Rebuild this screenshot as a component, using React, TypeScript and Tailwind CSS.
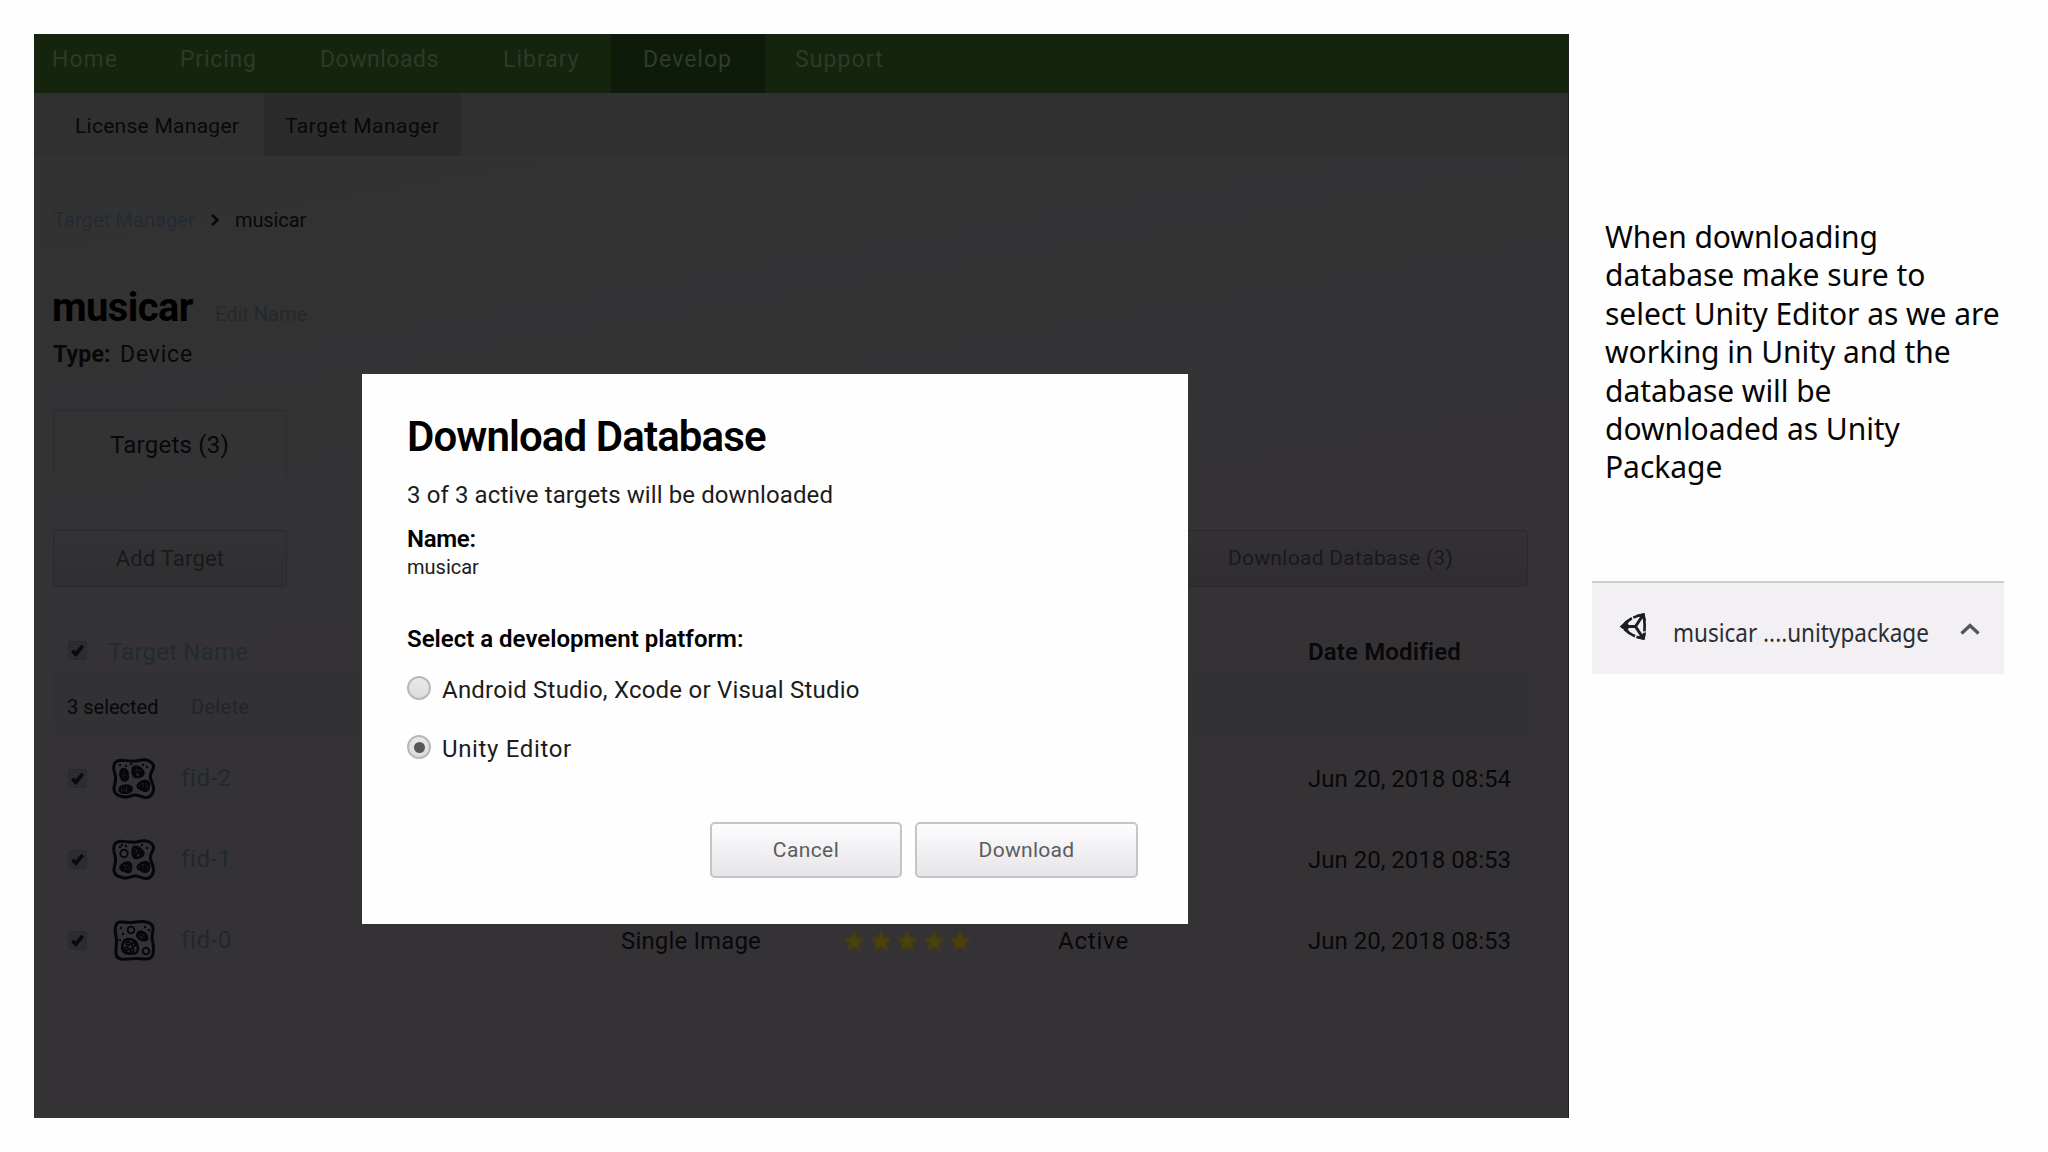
import type { ReactNode } from "react";

const INK = "text-[#08080a]";

function CheckBox() {
  return (
    <span className="flex h-[19px] w-[19px] items-center justify-center rounded-[3px] border border-[#2a2a2c] bg-[#2d2d2f]">
      <svg viewBox="0 0 16 16" className="h-[15px] w-[15px]">
        <path d="M2.500 8.200 6.200 12 13.600 3" fill="none" stroke="#0b0b0d" strokeWidth="3.900" />
      </svg>
    </span>
  );
}

const OUTLINE =
  "M7 2.500C11 1.500 15 3.500 20 3C25 4 28 1 33 1.800C38 2.500 42 5.500 41.500 9C41 13 37.500 15 38.500 20C39.500 24 42 27 41.500 32C41 37 37 40 33 39.500C29 39 26 36.500 22 37C18 38 15 40 10 38.500C5 37.500 1.500 35 2 30C2.500 26 4 24 3.500 19C3 15 1 12 1.800 8C2.300 5 4 3 7 2.500Z";
const SQUARE =
  "M8 2C12 1.500 15 3 20 2.500C25 2 29 1 33 1.800C38 2.500 41.500 5 41 10C40 14 39.500 17 40.500 21C41.500 25 41.500 30 41 34C40 39 36 39.500 31 39C26 38 21 38.500 16 39C10 40 4.500 39 4 34C3.500 29 5 25 4.500 20C4 15 2.500 11 3.500 7C4 4 5.500 2.300 8 2Z";

type Thumb = { outline: string; blobs: string[]; rings: [number, number, number][]; dots: [number, number][] };

const THUMBS: Record<string, Thumb> = {
  "fid-2": {
    outline: OUTLINE,
    blobs: [
      "M9 13C11 9 16 12 15.500 17C17 22 12 24 10 21C8 18 8 16 9 13Z",
      "M22 9C26 7 31 12 31.500 15C31 19 24 20 22 18C20 15 20 11 22 9Z",
      "M9 29C13 26 20 28 19.500 31C19 35 10 36 8 33C7 31 8 30 9 29Z",
      "M27 26C31 22 37 22 37 27C37 32 35 34 31 32C27 30 24 29 27 26Z",
    ],
    rings: [[12, 15, 1.7], [12.5, 20, 1.5], [24.5, 12, 1.8], [28, 15, 1.4], [23, 16, 1], [12, 31, 1.5], [16.5, 31, 1.2], [33.5, 26, 1.5], [33, 30, 1.2], [29.5, 28, 1]],
    dots: [[8, 7], [14, 8], [31, 7], [35, 9], [19, 6]],
  },
  "fid-1": {
    outline: OUTLINE,
    blobs: [
      "M22 8C26 7 31 12 31.500 14C31 18 24 20 22 18C20 15 20 10 22 8Z",
      "M10 26C14 22 19 23 19 28C19 33 17 34 13 32C9 31 7 29 10 26Z",
      "M27 26C31 22 37 22 37 27C37 32 35 34 31 32C27 30 24 29 27 26Z",
    ],
    rings: [[12, 14.5, 3.7], [24.5, 12, 1.8], [28, 14, 1.3], [23.5, 16, 1], [15.5, 26.5, 1.5], [15.5, 30.5, 1.2], [11.5, 28.5, 1], [33.5, 26, 1.5], [33, 30, 1.2], [29.5, 28, 1]],
    dots: [[8, 8], [14, 7], [30, 6], [35, 9], [10, 6]],
  },
  "fid-0": {
    outline: SQUARE,
    blobs: [
      "M13 20C17 18 24 20 25 24C26 27 27 31 24 33C20 34 14 34 12 32C9 29 10 23 13 20Z",
      "M26 13C30 9 36 15 35 19C33 22 26 19 25.500 16C25 15 25.500 14 26 13Z",
    ],
    rings: [[19, 10, 3.4], [34, 31, 3.3], [29, 14.5, 1.5], [32.5, 17.5, 1.3], [16, 23.5, 1.8], [21.5, 24.5, 1.8], [14.5, 29, 1.8], [20, 30, 1.8]],
    dots: [[9, 8], [11, 14], [33, 7], [37, 10], [8, 20]],
  },
};

function TargetThumb({ name }: { name: string }) {
  const t = THUMBS[name];
  return (
    <svg viewBox="0 0 43 41" className="h-[41px] w-[43px] translate-x-px" fill="none" stroke="#070709">
      <path d={t.outline} strokeWidth="3" />
      {t.blobs.map((d) => (
        <path key={d} d={d} strokeWidth="2.6" />
      ))}
      {t.rings.map(([x, y, r], i) => (
        <circle key={i} cx={x} cy={y} r={r} strokeWidth="1.9" />
      ))}
      {t.dots.map(([x, y], i) => (
        <circle key={i} cx={x} cy={y} r="1.2" fill="#070709" stroke="none" />
      ))}
    </svg>
  );
}

function Stars() {
  return (
    <span className="flex gap-[4.500px] pl-px">
      {[0, 1, 2, 3, 4].map((i) => (
        <svg key={i} viewBox="0 0 22 22" className="h-[22px] w-[22px]">
          <path
            d="M11 2 13.600 8 20 8.700 15.300 13.200 16.800 19.600 11 16.300 5.200 19.600 6.700 13.200 2 8.700 8.400 8Z"
            fill="#4b420c"
            stroke="#453d10"
            strokeWidth="2"
            strokeLinejoin="round"
          />
        </svg>
      ))}
    </span>
  );
}

const GRID = "grid grid-cols-[15px_43px_70px_440px_221px_216px_250px_218px] items-center";

function TargetRow({ name, date, details }: { name: string; date: string; details?: boolean }) {
  return (
    <div className={`${GRID} h-[81px] text-2xl ${INK}`}>
      <span />
      <CheckBox />
      <TargetThumb name={name} />
      <span className="-mt-[2px] tracking-[0.6px] text-[#1f282f]">{name}</span>
      <span className="tracking-[0.15px]">{details && "Single Image"}</span>
      <span>{details && <Stars />}</span>
      <span className="tracking-[0.8px]">{details && "Active"}</span>
      <span>{date}</span>
    </div>
  );
}

function Radio({ checked }: { checked?: boolean }) {
  return (
    <span className="flex h-6 w-6 items-center justify-center rounded-full border-2 border-[#b9b9bb] bg-linear-to-b from-[#e9e9ea] to-[#dcdcde]">
      {checked && <span className="h-[11px] w-[11px] rounded-full bg-[#58585a]" />}
    </span>
  );
}

function ModalButton({ className, children }: { className: string; children: ReactNode }) {
  return (
    <button
      className={`h-[56px] rounded-[5px] border-2 border-[#c6c4c8] bg-linear-to-b from-[#fdfcfe] to-[#e7e5e8] pt-px text-[21px] text-[#5c5c5e] ${className}`}
    >
      {children}
    </button>
  );
}

function DownloadDialog() {
  return (
    <div className="absolute top-[340px] left-[328px] flex h-[550px] w-[826px] flex-col bg-[#fefefe] pr-[50px] pl-[46px] text-[#1c1c20]">
      <h2 className="mt-[38px] -ml-[1px] text-[42px] leading-[50px] font-semibold tracking-[-0.9px] text-black">Download Database</h2>
      <p className="mt-[17px] -ml-px text-2xl leading-[32px] tracking-[0.1px]">3 of 3 active targets will be downloaded</p>
      <p className="mt-[12px] -ml-px text-2xl leading-[32px] font-semibold tracking-[-0.3px] text-black">Name:</p>
      <p className="-mt-px -ml-px text-xl leading-[26px]">musicar</p>
      <p className="mt-[43px] -ml-px text-2xl leading-[32px] font-semibold text-black">Select a development platform:</p>
      <label className="mt-[16px] -ml-px flex h-[34px] items-center gap-[11px] text-2xl tracking-[0.22px]">
        <Radio />
        <span className="pt-[3px]">Android Studio, Xcode or Visual Studio</span>
      </label>
      <label className="mt-[25px] -ml-px flex h-[34px] items-center gap-[11px] text-2xl tracking-[0.65px]">
        <Radio checked />
        <span className="pt-[3px]">Unity Editor</span>
      </label>
      <div className="mt-[58px] flex justify-end gap-[13px]">
        <ModalButton className="w-[192px] tracking-[0.4px]">Cancel</ModalButton>
        <ModalButton className="w-[223px] tracking-[0.3px]">Download</ModalButton>
      </div>
    </div>
  );
}

function TargetManager() {
  return (
    <section
      className={`relative h-[1084px] w-[1535px] shrink-0 overflow-hidden border-r border-[#202022] bg-linear-170 from-[#323232] from-10% via-[#333335] via-35% to-[#353235] to-60% ${INK}`}
    >
      <nav className="flex h-[59px] bg-[#14240d] pl-[18px] text-[23px] leading-[51px] text-[#2d3b28]">
        <span className="w-[128px] tracking-[1px]">Home</span>
        <span className="w-[140px] tracking-[0.8px]">Pricing</span>
        <span className="w-[183px] tracking-[0.5px]">Downloads</span>
        <span className="w-[108px] tracking-[1px]">Library</span>
        <span className="w-[154px] bg-[#0e1b0b] pl-[32px] tracking-[1px] text-[#303a2d]">Develop</span>
        <span className="pl-[30px] tracking-[1.100px]">Support</span>
      </nav>
      <div className="flex h-[63px] bg-[#303030] text-[21px] leading-[67px]">
        <span className="w-[230px] pl-[41px] tracking-[0.27px]">License Manager</span>
        <span className="w-[197px] bg-[#2b2b2b] pl-[21px] tracking-[0.5px]">Target Manager</span>
      </div>
      <div className="w-[1494px] pl-[19px]">
        <div className="mt-[50px] flex h-[28px] items-center text-xl">
          <span className="w-[158px] tracking-[0.1px] text-[#232b33]">Target Manager</span>
          <svg viewBox="0 0 8 12" className="mr-[16px] h-[12px] w-[8px]">
            <path d="M1.200 1 6.400 6 1.200 11" fill="none" stroke="#08080a" strokeWidth="2.600" />
          </svg>
          <span className="tracking-[-0.1px]">musicar</span>
        </div>
        <div className="mt-[50px] flex h-[48px] items-baseline leading-[48px]">
          <h1 className="-ml-px w-[163px] text-[40px] font-bold tracking-[-0.6px] text-black">musicar</h1>
          <span className="text-xl text-[#23292b]">Edit Name</span>
        </div>
        <div className="mt-[8px] flex h-[30px] text-[23px] leading-[30px]">
          <span className="w-[67px] font-bold tracking-[0.2px]">Type:</span>
          <span className="tracking-[0.8px]">Device</span>
        </div>
        <div className="mt-[40px] flex h-[66px]">
          <div className="w-[234px] border border-b-0 border-[#2c2c2e] pl-[56px] text-2xl leading-[68px] tracking-[0.25px]">Targets (3)</div>
          <div className="flex-1 border-b border-[#2f2f31]" />
        </div>
        <div className="mt-[54px] flex h-[57px] justify-between text-[#19191b]">
          <button className="w-[234px] rounded-[4px] border border-[#29292b] bg-linear-to-b from-[#333335] to-[#2f2f31] text-[22px] tracking-[0.2px]">
            Add Target
          </button>
          <button className="w-[375px] rounded-[4px] border border-[#2a282b] bg-linear-to-b from-[#343135] to-[#2f2d30] pt-px text-[21px] tracking-[0.3px]">
            Download Database (3)
          </button>
        </div>
        <div className={`${GRID} mt-[45px] h-[40px] text-2xl`}>
          <span />
          <span className="-mt-[4px]">
            <CheckBox />
          </span>
          <span className="col-span-5 -ml-[3px] tracking-[0.2px] text-[#222b2e]">Target Name</span>
          <span className="font-semibold tracking-[0.15px]">Date Modified</span>
        </div>
        <div className="flex h-[63px] bg-[#323134] pl-[14px] text-xl leading-[70px]">
          <span className="w-[124px]">3 selected</span>
          <span className="tracking-[0.3px] text-[#212628]">Delete</span>
        </div>
        <div className="mt-[3px]">
          <TargetRow name="fid-2" date="Jun 20, 2018 08:54" />
          <TargetRow name="fid-1" date="Jun 20, 2018 08:53" />
          <TargetRow name="fid-0" date="Jun 20, 2018 08:53" details />
        </div>
      </div>
      <DownloadDialog />
    </section>
  );
}

function UnityLogo() {
  return (
    <svg viewBox="0 0 28 29" className="h-[29px] w-[28px]" fill="none" stroke="#1d1d22" strokeLinejoin="round">
      <path d="M3 14.500C8 8.500 15 4 24.500 2.500C26 10 26 19 24.500 26.500C15 25 8 20.500 3 14.500Z" strokeWidth="2.700" strokeDasharray="13 1.500" />
      <path d="M3 14.500H16.500M16.500 14.500 24 3M16.500 14.500 24 26" strokeWidth="3" />
      <path d="M0.500 14.500 9.500 8.500V20.500ZM17.500 3 25.500 1 27 9ZM17.500 26 25.500 28 27 20Z" fill="#1d1d22" stroke="none" />
      <path d="M8.500 12 14.500 6.800 13.600 12ZM8.500 17 14.500 22.200 13.600 17Z" fill="#f2f0f3" stroke="none" />
    </svg>
  );
}

const NOTE_LINES = [
  "When downloading",
  "database make sure to",
  "select Unity Editor as we are",
  "working in Unity and the",
  "database will be",
  "downloaded as Unity",
  "Package",
];

export default function App() {
  return (
    <main className="flex h-[1152px] w-[2048px] overflow-hidden bg-[#fefefe] pt-[34px] pl-[34px] font-['Roboto',sans-serif]">
      <TargetManager />
      <aside className="flex flex-col pt-[184px] pl-[23px]">
        <p className="pl-[13px] font-['Noto_Sans',sans-serif] text-[30px] leading-[38.4px] tracking-[-0.05px] text-[#050505]">
          {NOTE_LINES.map((line) => (
            <span key={line} className="block whitespace-nowrap">
              {line}
            </span>
          ))}
        </p>
        <div className="mt-[94px] flex h-[93px] w-[412px] border-t-2 border-[#cfcdd1] bg-[#f2f0f3] pl-[27px]">
          <div className="mt-[29px] w-[54px]">
            <UnityLogo />
          </div>
          <span className="w-[287px] origin-left scale-x-90 font-['Noto_Sans',sans-serif] text-[25px] leading-[98px] whitespace-nowrap text-[#2c2c36]">
            musicar ....unitypackage
          </span>
          <svg viewBox="0 0 20 12" className="mt-[40px] h-[12px] w-[20px]">
            <path d="M1.500 10.500 10 2.500 18.500 10.500" fill="none" stroke="#56565a" strokeWidth="3.400" />
          </svg>
        </div>
      </aside>
    </main>
  );
}
